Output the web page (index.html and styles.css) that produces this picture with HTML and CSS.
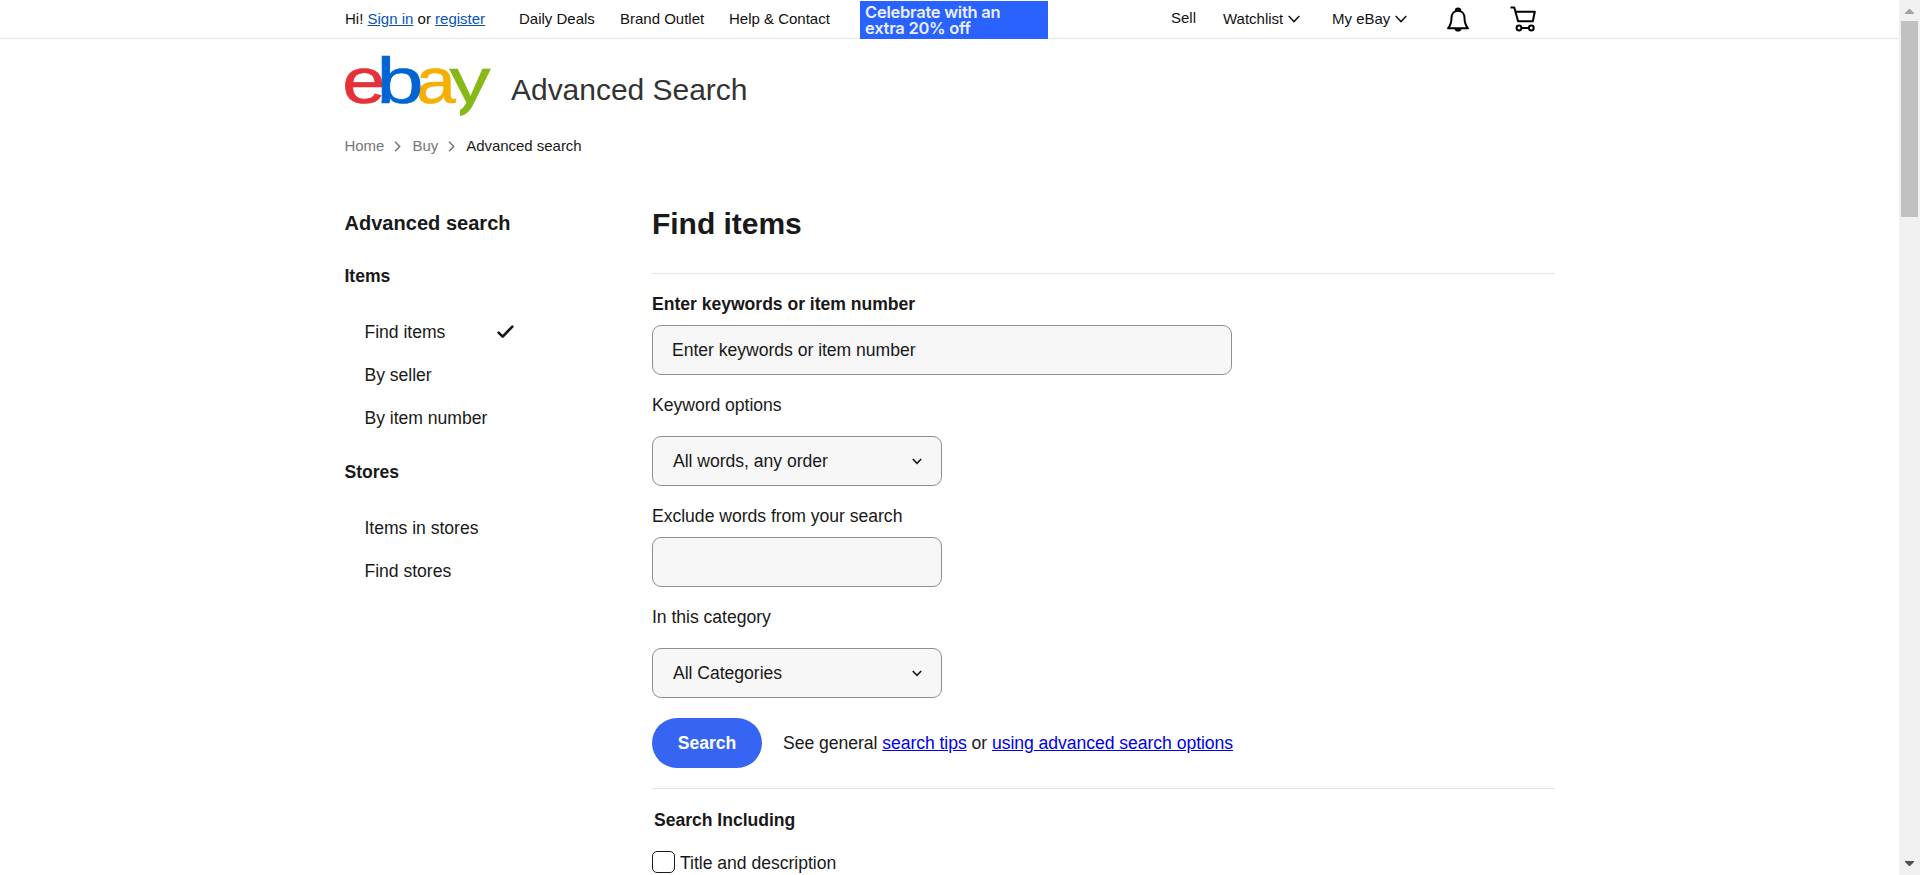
FILE: index.html
```html
<!DOCTYPE html>
<html lang="en">
<head>
<meta charset="utf-8">
<title>Advanced Search | eBay</title>
<link rel="stylesheet" href="styles.css">
</head>
<body>
<div class="page">
  <div class="topbar">
    <div class="topbar-left">
      <span class="greeting">Hi! <a href="#">Sign in</a> or <a href="#">register</a></span>
      <span class="nav-deals">Daily Deals</span>
      <span class="nav-outlet">Brand Outlet</span>
      <span class="nav-help">Help &amp; Contact</span>
      <div class="banner">Celebrate with an<br>extra 20% off</div>
    </div>
    <div class="topbar-right">
      <span class="nav-sell">Sell</span>
      <span class="nav-watch">Watchlist <svg class="caret" viewBox="0 0 12 8"><path d="M.7 .9 6 6.6 11.3 .9"/></svg></span>
      <span class="nav-my">My eBay <svg class="caret" viewBox="0 0 12 8"><path d="M.7 .9 6 6.6 11.3 .9"/></svg></span>
      <svg class="bell" viewBox="0 0 24 26"><path d="M2 21.3h20c-2.700-3-3.500-5.500-3.500-10.500 0-4-2.500-7-6.500-7s-6.500 3-6.500 7c0 5-.8 7.500-3.500 10.500zM9.800 3.800c0-3 4.400-3 4.400 0"/><path class="solid" d="M8.500 22h7c-.5 3.400-6.500 3.400-7 0z"/></svg>
      <svg class="cart" viewBox="0 0 26 26"><path d="M.5 1.500h3.800l3.800 13.800h14.700l2-9.600H5.500"/><circle cx="9" cy="22" r="2.400"/><circle cx="21.300" cy="22" r="2.400"/><path d="M11.400 22h7.500"/></svg>
    </div>
  </div>

  <header class="brand">
    <svg class="logo" viewBox="0 0 148 62">
      <clipPath id="tail"><path d="M100 0h60v62h-44v-10H100z"/></clipPath>
      <text class="logo-e" transform="translate(-1.800 48.500) scale(1.2 1)">e</text>
      <text class="logo-a" transform="translate(72 48.500) scale(1.1 1)">a</text>
      <text class="logo-b" transform="translate(32.400 48.500) scale(1.3 1)">b</text>
      <g clip-path="url(#tail)"><text class="logo-y" transform="translate(105.500 48.500) scale(1.26 1)">y</text></g>
    </svg>
    <span class="brand-title">Advanced Search</span>
  </header>

  <nav class="crumbs">
    <span>Home</span>
    <svg class="chev" viewBox="0 0 7 11"><path d="M1 .8 5.700 5.500 1 10.200"/></svg>
    <span>Buy</span>
    <svg class="chev" viewBox="0 0 7 11"><path d="M1 .8 5.700 5.500 1 10.200"/></svg>
    <span class="current">Advanced search</span>
  </nav>

  <div class="columns">
    <aside class="side">
      <h2 class="side-title">Advanced search</h2>
      <h3 class="side-group">Items</h3>
      <ul class="side-list">
        <li>Find items <svg class="check" viewBox="0 0 17 14"><path d="M1.600 7.600 5.700 11.600 15.300 1.600"/></svg></li>
        <li>By seller</li>
        <li>By item number</li>
      </ul>
      <h3 class="side-group">Stores</h3>
      <ul class="side-list stores">
        <li>Items in stores</li>
        <li>Find stores</li>
      </ul>
    </aside>

    <main class="main">
      <h1 class="main-title">Find items</h1>
      <section class="form">
        <label class="label strong">Enter keywords or item number</label>
        <div class="field wide">Enter keywords or item number</div>
        <label class="label spaced">Keyword options</label>
        <div class="field select">All words, any order<svg class="arrow" viewBox="0 0 10 7"><path d="M.8 1 5 5.400 9.200 1"/></svg></div>
        <label class="label">Exclude words from your search</label>
        <div class="field"></div>
        <label class="label spaced">In this category</label>
        <div class="field select last">All Categories<svg class="arrow" viewBox="0 0 10 7"><path d="M.8 1 5 5.400 9.200 1"/></svg></div>
        <div class="actions">
          <button class="search">Search</button>
          <span>See general <a href="#">search tips</a> or <a href="#">using advanced search options</a></span>
        </div>
      </section>
      <section class="including">
        <h3 class="including-title">Search Including</h3>
        <label class="option"><span class="box"></span>Title and description</label>
      </section>
    </main>
  </div>
</div>
<div class="scrollbar">
  <svg class="up" viewBox="0 0 9 5"><path d="M0 5V4L4 0h1l4 4v1z"/></svg>
  <div class="thumb"></div>
  <svg class="down" viewBox="0 0 9 5"><path d="M0 0v1l4 4h1l4-4V0z"/></svg>
</div>
</body>
</html>
```
FILE: styles.css
```css
* { box-sizing: border-box; }
html { overflow: hidden; }
body {
  margin: 0;
  height: 875px;
  display: flex;
  overflow: hidden;
  background: #fff;
  color: #191919;
  font: 17.6px/24px "Liberation Sans", Arial, sans-serif;
  letter-spacing: -.03px;
}
h1, h2, h3, ul { margin: 0; padding: 0; }
ul { list-style: none; }
svg { display: block; fill: none; stroke: #191919; flex: none; }
.page { flex: 1; min-width: 0; height: 875px; overflow: hidden; }

.topbar {
  height: 39px;
  padding: 0 344px 0 345px;
  display: flex;
  justify-content: space-between;
  border-bottom: 1px solid #e5e5e5;
  font-size: 15px;
  line-height: 20px;
  letter-spacing: 0;
  color: #111;
  white-space: nowrap;
}
.topbar-left, .topbar-right { display: flex; align-items: flex-start; }
.topbar-left > span, .topbar-right > span { margin-top: 9px; }
.greeting { width: 174px; }
.greeting a { color: #0654ba; }
.nav-deals { width: 101px; }
.nav-outlet { width: 109px; }
.nav-help { width: 131px; }
.banner {
  width: 188px;
  height: 38px;
  margin-top: 1px;
  padding: 3px 5px;
  background: #2962ff;
  color: #e9efff;
  font: 600 16.5px/16px Inter, "Liberation Sans", sans-serif;
  letter-spacing: -.25px;
}
.topbar-right { width: 384px; }
.topbar-right .nav-sell { width: 52px; margin-top: 8px; }
.nav-watch, .nav-my { display: flex; align-items: center; gap: 5px; }
.nav-watch { width: 109px; }
.nav-my { width: 114px; }
.caret { width: 12px; height: 8px; stroke: #111; stroke-width: 1.4; }
.bell { width: 24px; height: 26px; margin-top: 7px; stroke: #000; stroke-width: 2; stroke-linejoin: round; }
.bell .solid { fill: #000; stroke: none; }
.cart { width: 26px; height: 26px; margin: 6px 0 0 40px; stroke: #000; stroke-width: 2; stroke-linejoin: round; }

.brand { display: flex; padding: 15px 0 0 344px; height: 97px; }
.logo { width: 148px; height: 62px; overflow: visible; font: 65px "Liberation Sans", Arial, sans-serif; stroke-width: .7; }
.logo-e { fill: #e53238; stroke: #e53238; }
.logo-b { fill: #0064d2; stroke: #0064d2; }
.logo-a { fill: #f5af02; stroke: #f5af02; }
.logo-y { fill: #86b817; stroke: #86b817; }
.brand-title { margin: 16px 0 0 19px; font-size: 30px; line-height: 40px; color: #333; }

.crumbs { display: flex; align-items: center; height: 20px; padding-left: 344.5px; font-size: 15px; line-height: 20px; color: #767676; }
.chev { width: 7px; height: 11px; margin: 0 11px 0 10px; stroke: #767676; stroke-width: 1.5; }
.current { color: #191919; }

.columns { display: flex; padding: 48px 0 0 344px; }
.side { width: 308px; padding: 7px 0 0 .5px; }
.side-title { font-size: 20px; line-height: 24px; letter-spacing: .03px; }
.side-group { margin-top: 29px; font-size: 17.6px; line-height: 24px; }
.side-list { margin-top: 22px; padding-left: 20px; }
.side-list li { display: flex; align-items: center; height: 43px; }
.side-list + .side-group { margin-top: 21px; }
.side-list.stores { margin-top: 22px; }
.check { width: 17px; height: 14px; margin-left: 52px; stroke-width: 2.7; stroke-linecap: round; stroke-linejoin: round; }

.main { width: 903px; }
.main-title { height: 70px; font-size: 30px; line-height: 40px; border-bottom: 1px solid #e5e5e5; }
.form { padding-top: 18px; height: 515px; border-bottom: 1px solid #e5e5e5; }
.label { display: block; height: 33px; line-height: 24px; }
.label.strong { font-weight: bold; }
.label.spaced { height: 43px; }
.field {
  width: 290px;
  height: 50px;
  margin-bottom: 18px;
  padding: 0 19px 0 20px;
  display: flex;
  align-items: center;
  justify-content: space-between;
  border: 1px solid #8f8f8f;
  border-radius: 9px;
  background: #f7f7f7;
}
.field.wide { width: 580px; padding-left: 19px; }
.field.last { margin-bottom: 20px; }
.arrow { width: 10px; height: 7px; stroke-width: 1.6; }
.actions { display: flex; align-items: center; gap: 21px; letter-spacing: -.05px; }
.actions a { color: #0000ee; }
.search { width: 110px; height: 50px; border: 0; border-radius: 25px; background: #3665f3; color: #fff; font: bold 17.6px "Liberation Sans", Arial, sans-serif; }
.including { padding-top: 19px; }
.including-title { padding-left: 2px; font-size: 17.6px; line-height: 24px; }
.option { display: flex; gap: 5px; margin-top: 19px; line-height: 24px; }
.box { width: 23px; height: 22px; border: 1.500px solid #191919; border-radius: 5px; }

.scrollbar { width: 21px; height: 875px; padding: 9px 2px; display: flex; flex-direction: column; align-items: center; background: #f1f1f1; }
.scrollbar svg { width: 9px; height: 5px; stroke: none; }
.up { fill: #a3a3a3; }
.down { fill: #505050; margin-top: auto; }
.thumb { width: 17px; height: 196px; margin-top: 7px; background: #c1c1c1; }
```
